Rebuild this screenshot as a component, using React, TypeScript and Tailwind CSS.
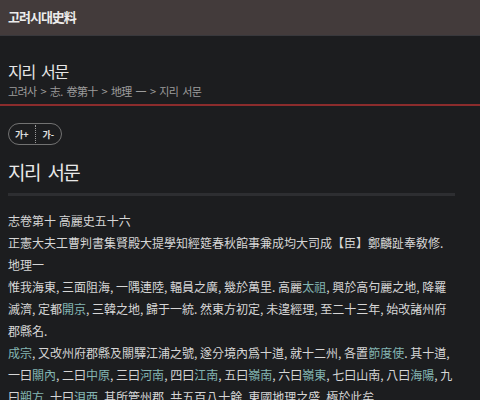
import type { ReactNode } from 'react'

function L({ children }: { children: ReactNode }) {
  return <span className="text-[#84b6b3]">{children}</span>
}

export default function App() {
  return (
    <div
      className="w-[480px] h-[400px] overflow-hidden bg-[#1c1d1f] text-[#d6d6d6]"
      style={{ fontFamily: '"Noto Sans CJK KR", "Noto Sans", sans-serif' }}
    >
      {/* Top bar */}
      <div className="h-[36px] bg-[#433b3b] border-b border-[#38383c] px-2 pt-[3px]">
        <span className="text-[13px] leading-[18px] font-bold tracking-[-1px] text-[#ececec]">고려시대史料</span>
      </div>

      {/* Page title + breadcrumb */}
      <div className="px-2 pt-[23px] pb-[5px] border-b-2 border-[#8b2c2c]">
        <h1 className="text-[16px] leading-[24px] tracking-[-1.3px] [word-spacing:4px] text-[#e6e6e6]">지리 서문</h1>
        <p className="text-[11px] leading-[16px] tracking-[-0.6px] [word-spacing:2px] text-[#9c9c9c]">고려사 &gt; 志. 卷第十 &gt; 地理 一 &gt; 지리 서문</p>
      </div>

      <div className="ml-2 w-[447px]">
        {/* Font size buttons */}
        <div className="mt-[17px] flex h-[22px] w-[54px] items-center rounded-full border-[1.5px] border-[#727272]">
          <button className="flex-1 text-[9px] font-bold leading-none text-[#e0e0e0]">가+</button>
          <span className="h-[18px] border-l border-dotted border-[#9a9a9a]" />
          <button className="flex-1 text-[9px] font-bold leading-none text-[#e0e0e0]">가-</button>
        </div>

        <h2 className="mt-[13px] text-[19px] leading-[28px] tracking-[-1.6px] [word-spacing:5px] text-[#e8e8e8]">지리 서문</h2>
        <div className="mt-[7px] h-[3px] bg-[#2d2e31]" />

        {/* Body text */}
        <div className="mt-[14px] text-[12px] leading-[22px]">
          <p>志卷第十 高麗史五十六</p>
          <p>正憲大夫工曹判書集賢殿大提學知經筵春秋館事兼成均大司成【臣】鄭麟趾奉敎修.</p>
          <p>地理一</p>
          <p>
            惟我海東, 三面阻海, 一隅連陸, 輻員之廣, 幾於萬里. 高麗<L>太祖</L>, 興於高句麗之地, 降羅滅濟, 定都<L>開京</L>, 三韓之地, 歸于一統. 然東方初定, 未遑經理, 至二十三年, 始改諸州府郡縣名.
          </p>
          <p>
            <L>成宗</L>, 又改州府郡縣及關驛江浦之號, 遂分境內爲十道, 就十二州, 各置<L>節度使</L>. 其十道, 一曰<L>關內</L>, 二曰<L>中原</L>, 三曰<L>河南</L>, 四曰<L>江南</L>, 五曰<L>嶺南</L>, 六曰<L>嶺東</L>, 七曰山南, 八曰<L>海陽</L>, 九曰<L>朔方</L>, 十曰<L>浿西</L>. 其所管州郡, 共五百八十餘. 東國地理之盛, 極於此矣.
          </p>
        </div>
      </div>
    </div>
  )
}
